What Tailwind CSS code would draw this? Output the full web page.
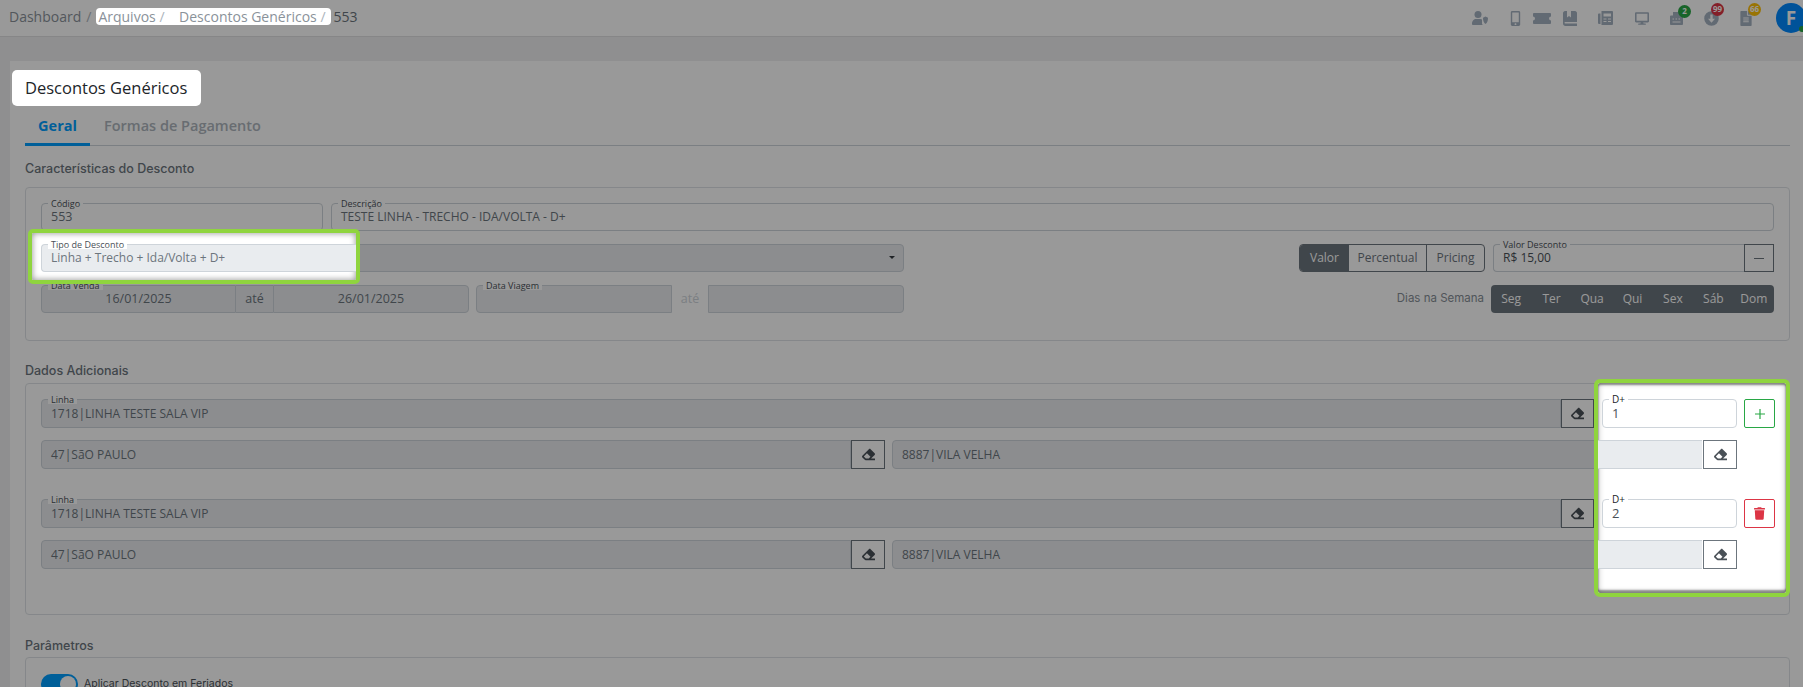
<!DOCTYPE html>
<html lang="en">
<head>
    <meta charset="UTF-8">
    <meta name="viewport" content="width=device-width, initial-scale=1.0">
    <title>Descontos Genéricos</title>
    <script src="https://cdn.jsdelivr.net/npm/@tailwindcss/browser@4"></script>
</head>
<body class="bg-[#eeeef0]">
<div class="relative h-[687px] overflow-hidden font-['Open_Sans',sans-serif] text-[#6c757d]">

    <!-- Header -->
    <header class="h-[37px] bg-white border-b border-[#dfe0e2] flex items-center justify-between pl-[9px]">
        <div class="flex items-center text-[14px] leading-[17px] -mt-[3px] text-[#8a929a]">
            <span>Dashboard</span><span class="ml-[5px] text-[#adb5bd]">/</span>
            <span class="relative z-30 ml-[5px] w-[235px] h-[17px] bg-white rounded-[4px] pl-[2px] whitespace-pre">Arquivos <span class="text-[#adb5bd]">/</span>    Descontos Genéricos <span class="text-[#adb5bd]">/</span></span>
            <span class="ml-[2px] text-[#6c757d]">553</span>
        </div>
        <div class="flex items-center text-[#a3b1c0] -mr-[3px]">
            <!-- user shield -->
            <svg class="w-[16px] h-[14px]" viewBox="0 0 32 28" fill="currentColor"><circle cx="12" cy="7" r="7"/><path d="M0 26c0-7 4-10 8-10h8c2 0 3 .4 4 1v8c0 1 .5 2 1.500 3H2c-1 0-2-1-2-2z"/><path d="M27 11l-5 2.500c0 6 1.500 10 5 12.500 3.500-2.500 5-6.500 5-12.500z"/></svg>
            <!-- mobile -->
            <svg class="ml-[22px] w-[11px] h-[15px]" viewBox="0 0 320 512" fill="currentColor"><path d="M272 0H48C21.500 0 0 21.500 0 48v416c0 26.500 21.500 48 48 48h224c26.500 0 48-21.500 48-48V48c0-26.500-21.500-48-48-48zM160 480c-17.700 0-32-14.300-32-32s14.300-32 32-32 32 14.300 32 32-14.300 32-32 32zm112-108c0 6.600-5.400 12-12 12H60c-6.600 0-12-5.400-12-12V60c0-6.600 5.400-12 12-12h200c6.600 0 12 5.400 12 12v312z"/></svg>
            <!-- ticket -->
            <svg class="ml-[12px] w-[18px] h-[11px]" viewBox="0 0 36 22" fill="currentColor"><path d="M2 0h32c1 0 2 1 2 2v5a4 4 0 0 0 0 8v5c0 1-1 2-2 2H2c-1 0-2-1-2-2v-5a4 4 0 0 0 0-8V2c0-1 1-2 2-2z"/></svg>
            <!-- book -->
            <svg class="ml-[12px] w-[14px] h-[15px]" viewBox="0 0 28 30" fill="currentColor"><path d="M4 0h4v13l4-3 4 3V0h8c2 0 4 2 4 4v18H5c-1.500 0-2 1-2 1.500S3.500 25 5 25h23v5H5c-3 0-5-2.500-5-5V4c0-2 2-4 4-4z"/></svg>
            <!-- fax -->
            <svg class="ml-[21px] w-[15px] h-[14px]" viewBox="0 0 30 28" fill="currentColor" fill-rule="evenodd"><path d="M0 7c0-1 1-2 2-2h3v21H3c-2 0-3-1-3-3zM7 0h21c1 0 2 1 2 2v23c0 2-1 3-3 3H7zm4 5v6h15V5zm0 10v2h6v-2zm9 0v2h6v-2zm-9 5v2h6v-2zm9 0v2h6v-2z"/></svg>
            <!-- desktop -->
            <svg class="ml-[22px] w-[14px] h-[13px]" viewBox="0 0 576 512" fill="currentColor"><path d="M528 0H48C21.500 0 0 21.500 0 48v320c0 26.500 21.500 48 48 48h192l-16 48h-72c-13.300 0-24 10.700-24 24s10.700 24 24 24h272c13.300 0 24-10.700 24-24s-10.700-24-24-24h-72l-16-48h192c26.500 0 48-21.500 48-48V48c0-26.500-21.500-48-48-48zm-16 352H64V64h448v288z"/></svg>
            <!-- typewriter + badge -->
            <div class="relative ml-[21px]">
                <svg class="w-[13px] h-[13px]" viewBox="0 0 26 26" fill="currentColor" fill-rule="evenodd"><path d="M6 0h14v7h4c1 0 2 1 2 2v15c0 1-1 2-2 2H2c-1 0-2-1-2-2V9c0-1 1-2 2-2h4zm-1 13v2h3v-2zm6 0v2h3v-2zm6 0v2h3v-2zM5 19v2h16v-2z"/></svg>
                <span class="absolute -top-[7px] left-[8px] w-[13px] h-[13px] rounded-full bg-[#28a745] text-white text-[8px] font-bold flex items-center justify-center">2</span>
            </div>
            <!-- arrow circle + badge -->
            <div class="relative ml-[21px]">
                <svg class="w-[15px] h-[15px]" viewBox="0 0 512 512" fill="currentColor" fill-rule="evenodd"><path d="M256 8a248 248 0 1 1 0 496 248 248 0 0 1 0-496zm-40 110v150h-80l120 130 120-130h-80V118z"/></svg>
                <span class="absolute -top-[8px] left-[7px] w-[13px] h-[13px] rounded-full bg-[#dc3545] text-white text-[8px] font-bold flex items-center justify-center">99</span>
            </div>
            <!-- file + badge -->
            <div class="relative ml-[21px]">
                <svg class="w-[12px] h-[15px]" viewBox="0 0 384 512" fill="currentColor"><path d="M224 136V0H24C10.700 0 0 10.700 0 24v464c0 13.300 10.700 24 24 24h336c13.300 0 24-10.700 24-24V160H248c-13.200 0-24-10.800-24-24zm64 236c0 6.600-5.400 12-12 12H108c-6.600 0-12-5.400-12-12v-8c0-6.600 5.400-12 12-12h168c6.600 0 12 5.400 12 12v8zm0-64c0 6.600-5.400 12-12 12H108c-6.600 0-12-5.400-12-12v-8c0-6.600 5.400-12 12-12h168c6.600 0 12 5.400 12 12v8zm0-72v8c0 6.600-5.400 12-12 12H108c-6.600 0-12-5.400-12-12v-8c0-6.600 5.400-12 12-12h168c6.600 0 12 5.400 12 12zm96-114.100v6.100H256V0h6.100c6.400 0 12.500 2.500 17 7l97.900 98c4.500 4.500 7 10.600 7 16.900z"/></svg>
                <span class="absolute -top-[8px] left-[8px] w-[13px] h-[13px] rounded-full bg-[#ffc107] text-white text-[8px] font-bold flex items-center justify-center">66</span>
            </div>
            <!-- avatar -->
            <div class="relative ml-[24px] w-[30px] h-[30px] rounded-full bg-[#0089ff] text-white font-bold text-[19px] flex items-center justify-center">F
                <span class="absolute right-[1px] bottom-[1px] w-[6px] h-[6px] rounded-full bg-[#28a745]"></span>
            </div>
        </div>
    </header>

    <!-- Content -->
    <main class="pt-[24px] pl-[10px]">
        <div class="bg-white pl-[15px] pr-[13px] h-[640px] flow-root">
            <div class="relative z-30 -ml-[13px] w-[189px] h-[36px] mt-[9px] bg-white rounded-[5px] pl-[13px] flex items-center text-[16.500px] text-[#212529]">Descontos Genéricos</div>

            <!-- Tabs -->
            <div class="h-[40px] border-b border-[#ced4da] flex text-[14.500px] font-semibold pt-[9px]">
                <div class="w-[65px] h-[31px] border-b-[3px] border-[#009eff] text-[#009eff] font-bold text-center">Geral</div>
                <div class="ml-[14px] text-[#adb5bd]">Formas de Pagamento</div>
            </div>

            <!-- Caracteristicas -->
            <h3 class="mt-[14px] h-[27px] text-[12.500px] leading-[17px] font-medium font-['Inter',sans-serif] text-[#6c757d]">Características do Desconto</h3>
            <section class="h-[154px] border border-[#dee2e6] rounded-[4px] px-[15px] pt-[15px] text-[12px]">
                <div class="flex gap-[8px] h-[28px]">
                    <div class="relative w-[282px] border border-[#ced4da] rounded-[4px] pl-[9px] flex items-center text-[12.500px]">
                        <span class="absolute -top-[5px] left-[6px] px-[3px] bg-white text-[9px] leading-[9px] text-[#495057]">Código</span>553
                    </div>
                    <div class="relative flex-1 border border-[#ced4da] rounded-[4px] pl-[9px] flex items-center">
                        <span class="absolute -top-[5px] left-[6px] px-[3px] bg-white text-[9px] leading-[9px] text-[#495057]">Descrição</span>TESTE LINHA - TRECHO - IDA/VOLTA - D+
                    </div>
                </div>

                <div class="flex h-[28px] mt-[13px]">
                    <div class="relative w-[863px] border border-[#ced4da] rounded-[4px] bg-[#e9ecef]">
                        <div class="absolute z-30 -left-px -top-px h-[28px] w-[315px] border border-[#ced4da] border-r-0 rounded-l-[4px] bg-[#e9ecef] pl-[9px] flex items-center text-[#6c757d]">Linha + Trecho + Ida/Volta + D+
                            <span class="absolute -top-[5px] left-[6px] px-[3px] bg-white text-[9px] leading-[9px] text-[#495057]">Tipo de Desconto</span>
                        </div>
                        <span class="absolute right-[8px] top-[11px] border-x-[3px] border-x-transparent border-t-[3px] border-t-[#343a40]"></span>
                    </div>
                    <div class="ml-auto flex w-[186px] border border-[#6c757d] rounded-[4px] overflow-hidden">
                        <div class="w-[49px] bg-[#6c757d] text-white flex items-center justify-center">Valor</div>
                        <div class="w-[78px] border-r border-[#6c757d] flex items-center justify-center">Percentual</div>
                        <div class="flex-1 flex items-center justify-center">Pricing</div>
                    </div>
                    <div class="relative ml-[8px] w-[281px] flex">
                        <div class="relative flex-1 border border-[#ced4da] border-r-0 rounded-l-[4px] pl-[9px] flex items-center text-[#495057]">
                            <span class="absolute -top-[5px] left-[6px] px-[3px] bg-white text-[9px] leading-[9px] text-[#495057]">Valor Desconto</span>R$ 15,00
                        </div>
                        <div class="w-[30px] border border-[#6c757d] flex items-center justify-center"><span class="w-[10px] h-px bg-[#6c757d]"></span></div>
                    </div>
                </div>

                <div class="flex h-[28px] mt-[13px] text-[12.500px]">
                    <div class="flex w-[428px]">
                        <div class="relative w-[195px] border border-[#ced4da] rounded-l-[4px] bg-[#e9ecef] flex items-center justify-center">
                            <span class="absolute -top-[5px] left-[6px] px-[3px] bg-white text-[9px] leading-[9px] text-[#495057]">Data Venda</span>16/01/2025
                        </div>
                        <div class="w-[37px] border-y border-[#ced4da] bg-[#e9ecef] flex items-center justify-center">até</div>
                        <div class="flex-1 border border-[#ced4da] rounded-r-[4px] bg-[#e9ecef] flex items-center justify-center">26/01/2025</div>
                    </div>
                    <div class="flex w-[428px] ml-[7px]">
                        <div class="relative w-[196px] border border-[#ced4da] rounded-l-[4px] bg-[#e9ecef]">
                            <span class="absolute -top-[5px] left-[6px] px-[3px] bg-white text-[9px] leading-[9px] text-[#495057]">Data Viagem</span>
                        </div>
                        <div class="w-[36px] flex items-center justify-center text-[#ced4da]">até</div>
                        <div class="flex-1 border border-[#ced4da] rounded-r-[4px] bg-[#e9ecef]"></div>
                    </div>
                    <div class="ml-auto pr-[7px] flex items-center text-[11.500px] font-['Inter',sans-serif] text-[#868e96]">Dias na Semana</div>
                    <div class="w-[283px] bg-[#6c757d] rounded-[4px] text-white text-[12px] grid grid-cols-7 items-center text-center">
                        <span>Seg</span><span>Ter</span><span>Qua</span><span>Qui</span><span>Sex</span><span>Sáb</span><span>Dom</span>
                    </div>
                </div>
            </section>

            <!-- Dados adicionais -->
            <h3 class="mt-[21px] h-[21px] text-[12.500px] leading-[17px] font-medium font-['Inter',sans-serif] text-[#6c757d]">Dados Adicionais</h3>
            <section class="h-[232px] border border-[#dee2e6] rounded-[4px] pl-[15px] pr-[14px] pt-[15px] text-[12px]">
                <div class="flex h-[29px]">
                    <div class="relative flex-1 border border-[#ced4da] rounded-l-[4px] bg-[#e9ecef] pl-[9px] flex items-center">
                        <span class="absolute -top-[5px] left-[6px] px-[3px] bg-white text-[9px] leading-[9px] text-[#495057]">Linha</span>1718|LINHA TESTE SALA VIP
                    </div>
                    <button class="w-[33px] border border-[#6c757d] flex items-center justify-center text-[#495057]"><svg class="w-[13px] h-[13px]" viewBox="0 0 512 512" fill="currentColor"><path d="M497.941 273.941c18.745-18.745 18.745-49.137 0-67.882l-160-160c-18.745-18.745-49.136-18.746-67.883 0l-256 256c-18.745 18.745-18.745 49.137 0 67.882l96 96A48.004 48.004 0 0 0 144 480h356c6.627 0 12-5.373 12-12v-40c0-6.627-5.373-12-12-12H355.883l142.058-142.059zm-302.627-62.627l137.373 137.373L265.373 416H150.628l-80-80 124.686-124.686z"/></svg></button>
                    <div class="relative z-30 ml-[8px] w-[135px] border border-[#ced4da] rounded-[4px] bg-white pl-[9px] flex items-center text-[13px] text-[#495057]">
                        <span class="absolute -top-[5px] left-[6px] px-[3px] bg-white text-[10px] leading-[9px] text-[#212529]">D+</span>1
                    </div>
                    <button class="relative z-30 ml-[7px] w-[31px] border border-[#28a745] rounded-[2px] bg-white flex items-center justify-center"><svg class="w-[12px] h-[12px]" viewBox="0 0 12 12" fill="none" stroke="#28a745" stroke-width="1.200"><path d="M6 1v10M1 6h10"/></svg></button>
                </div>
                <div class="flex h-[29px] mt-[12px]">
                    <div class="flex-1 border border-[#ced4da] rounded-l-[4px] bg-[#e9ecef] pl-[9px] flex items-center">47|SãO PAULO</div>
                    <button class="w-[34px] border border-[#6c757d] flex items-center justify-center text-[#495057]"><svg class="w-[13px] h-[13px]" viewBox="0 0 512 512" fill="currentColor"><path d="M497.941 273.941c18.745-18.745 18.745-49.137 0-67.882l-160-160c-18.745-18.745-49.136-18.746-67.883 0l-256 256c-18.745 18.745-18.745 49.137 0 67.882l96 96A48.004 48.004 0 0 0 144 480h356c6.627 0 12-5.373 12-12v-40c0-6.627-5.373-12-12-12H355.883l142.058-142.059zm-302.627-62.627l137.373 137.373L265.373 416H150.628l-80-80 124.686-124.686z"/></svg></button>
                    <div class="relative ml-[7px] w-[811px] border border-[#ced4da] rounded-l-[4px] bg-[#e9ecef] pl-[9px] flex items-center">8887|VILA VELHA
                        <div class="absolute z-30 -top-px -bottom-px right-0 w-[104px] border-y border-[#ced4da] bg-[#e9ecef]"></div>
                    </div>
                    <button class="relative z-30 mr-[38px] w-[34px] border border-[#6c757d] bg-white flex items-center justify-center text-[#495057]"><svg class="w-[13px] h-[13px]" viewBox="0 0 512 512" fill="currentColor"><path d="M497.941 273.941c18.745-18.745 18.745-49.137 0-67.882l-160-160c-18.745-18.745-49.136-18.746-67.883 0l-256 256c-18.745 18.745-18.745 49.137 0 67.882l96 96A48.004 48.004 0 0 0 144 480h356c6.627 0 12-5.373 12-12v-40c0-6.627-5.373-12-12-12H355.883l142.058-142.059zm-302.627-62.627l137.373 137.373L265.373 416H150.628l-80-80 124.686-124.686z"/></svg></button>
                </div>

                <div class="flex h-[29px] mt-[30px]">
                    <div class="relative flex-1 border border-[#ced4da] rounded-l-[4px] bg-[#e9ecef] pl-[9px] flex items-center">
                        <span class="absolute -top-[5px] left-[6px] px-[3px] bg-white text-[9px] leading-[9px] text-[#495057]">Linha</span>1718|LINHA TESTE SALA VIP
                    </div>
                    <button class="w-[33px] border border-[#6c757d] flex items-center justify-center text-[#495057]"><svg class="w-[13px] h-[13px]" viewBox="0 0 512 512" fill="currentColor"><path d="M497.941 273.941c18.745-18.745 18.745-49.137 0-67.882l-160-160c-18.745-18.745-49.136-18.746-67.883 0l-256 256c-18.745 18.745-18.745 49.137 0 67.882l96 96A48.004 48.004 0 0 0 144 480h356c6.627 0 12-5.373 12-12v-40c0-6.627-5.373-12-12-12H355.883l142.058-142.059zm-302.627-62.627l137.373 137.373L265.373 416H150.628l-80-80 124.686-124.686z"/></svg></button>
                    <div class="relative z-30 ml-[8px] w-[135px] border border-[#ced4da] rounded-[4px] bg-white pl-[9px] flex items-center text-[13px] text-[#495057]">
                        <span class="absolute -top-[5px] left-[6px] px-[3px] bg-white text-[10px] leading-[9px] text-[#212529]">D+</span>2
                    </div>
                    <button class="relative z-30 ml-[7px] w-[31px] border border-[#dc3545] rounded-[2px] bg-white flex items-center justify-center"><svg class="w-[11px] h-[13px]" viewBox="0 0 448 512" fill="#dc3545"><path d="M432 32H312l-9.400-18.700A24 24 0 0 0 281.100 0H166.800a23.720 23.720 0 0 0-21.400 13.300L136 32H16A16 16 0 0 0 0 48v32a16 16 0 0 0 16 16h416a16 16 0 0 0 16-16V48a16 16 0 0 0-16-16zM53.200 467a48 48 0 0 0 47.900 45h245.800a48 48 0 0 0 47.900-45L416 128H32z"/></svg></button>
                </div>
                <div class="flex h-[29px] mt-[12px]">
                    <div class="flex-1 border border-[#ced4da] rounded-l-[4px] bg-[#e9ecef] pl-[9px] flex items-center">47|SãO PAULO</div>
                    <button class="w-[34px] border border-[#6c757d] flex items-center justify-center text-[#495057]"><svg class="w-[13px] h-[13px]" viewBox="0 0 512 512" fill="currentColor"><path d="M497.941 273.941c18.745-18.745 18.745-49.137 0-67.882l-160-160c-18.745-18.745-49.136-18.746-67.883 0l-256 256c-18.745 18.745-18.745 49.137 0 67.882l96 96A48.004 48.004 0 0 0 144 480h356c6.627 0 12-5.373 12-12v-40c0-6.627-5.373-12-12-12H355.883l142.058-142.059zm-302.627-62.627l137.373 137.373L265.373 416H150.628l-80-80 124.686-124.686z"/></svg></button>
                    <div class="relative ml-[7px] w-[811px] border border-[#ced4da] rounded-l-[4px] bg-[#e9ecef] pl-[9px] flex items-center">8887|VILA VELHA
                        <div class="absolute z-30 -top-px -bottom-px right-0 w-[104px] border-y border-[#ced4da] bg-[#e9ecef]"></div>
                    </div>
                    <button class="relative z-30 mr-[38px] w-[34px] border border-[#6c757d] bg-white flex items-center justify-center text-[#495057]"><svg class="w-[13px] h-[13px]" viewBox="0 0 512 512" fill="currentColor"><path d="M497.941 273.941c18.745-18.745 18.745-49.137 0-67.882l-160-160c-18.745-18.745-49.136-18.746-67.883 0l-256 256c-18.745 18.745-18.745 49.137 0 67.882l96 96A48.004 48.004 0 0 0 144 480h356c6.627 0 12-5.373 12-12v-40c0-6.627-5.373-12-12-12H355.883l142.058-142.059zm-302.627-62.627l137.373 137.373L265.373 416H150.628l-80-80 124.686-124.686z"/></svg></button>
                </div>
            </section>

            <!-- Parametros -->
            <h3 class="mt-[22px] h-[20px] text-[12.500px] leading-[17px] font-medium font-['Inter',sans-serif] text-[#6c757d]">Parâmetros</h3>
            <section class="h-[60px] border border-[#dee2e6] rounded-[4px] px-[15px] pt-[16px]">
                <div class="flex items-center gap-[6px] text-[10.500px] font-['Inter',sans-serif] text-[#495057]">
                    <span class="w-[37px] h-[20px] rounded-full bg-[#009eff] flex justify-end items-center pr-[2px]"><span class="w-[16px] h-[16px] rounded-full bg-white"></span></span>
                    Aplicar Desconto em Feriados
                </div>
            </section>
        </div>
    </main>

    <!-- Tour overlay and the two highlight frames -->
    <div class="absolute inset-0 z-10 bg-black/40"></div>
    <div class="absolute z-20 left-[28px] top-[229px] w-[332px] h-[55px] rounded-[5px] border-[4px] border-[#8fd43e] bg-white shadow-[inset_0_0_6px_rgba(0,0,0,0.45)]"></div>
    <div class="absolute z-20 left-[1594px] top-[379px] w-[196px] h-[218px] rounded-[6px] border-[4px] border-[#8fd43e] bg-white shadow-[inset_0_2px_2px_rgba(0,0,0,0.4),inset_0_-3px_2px_rgba(0,0,0,0.4),inset_0_0_6px_rgba(0,0,0,0.3)]"></div>
</div>
</body>
</html>
